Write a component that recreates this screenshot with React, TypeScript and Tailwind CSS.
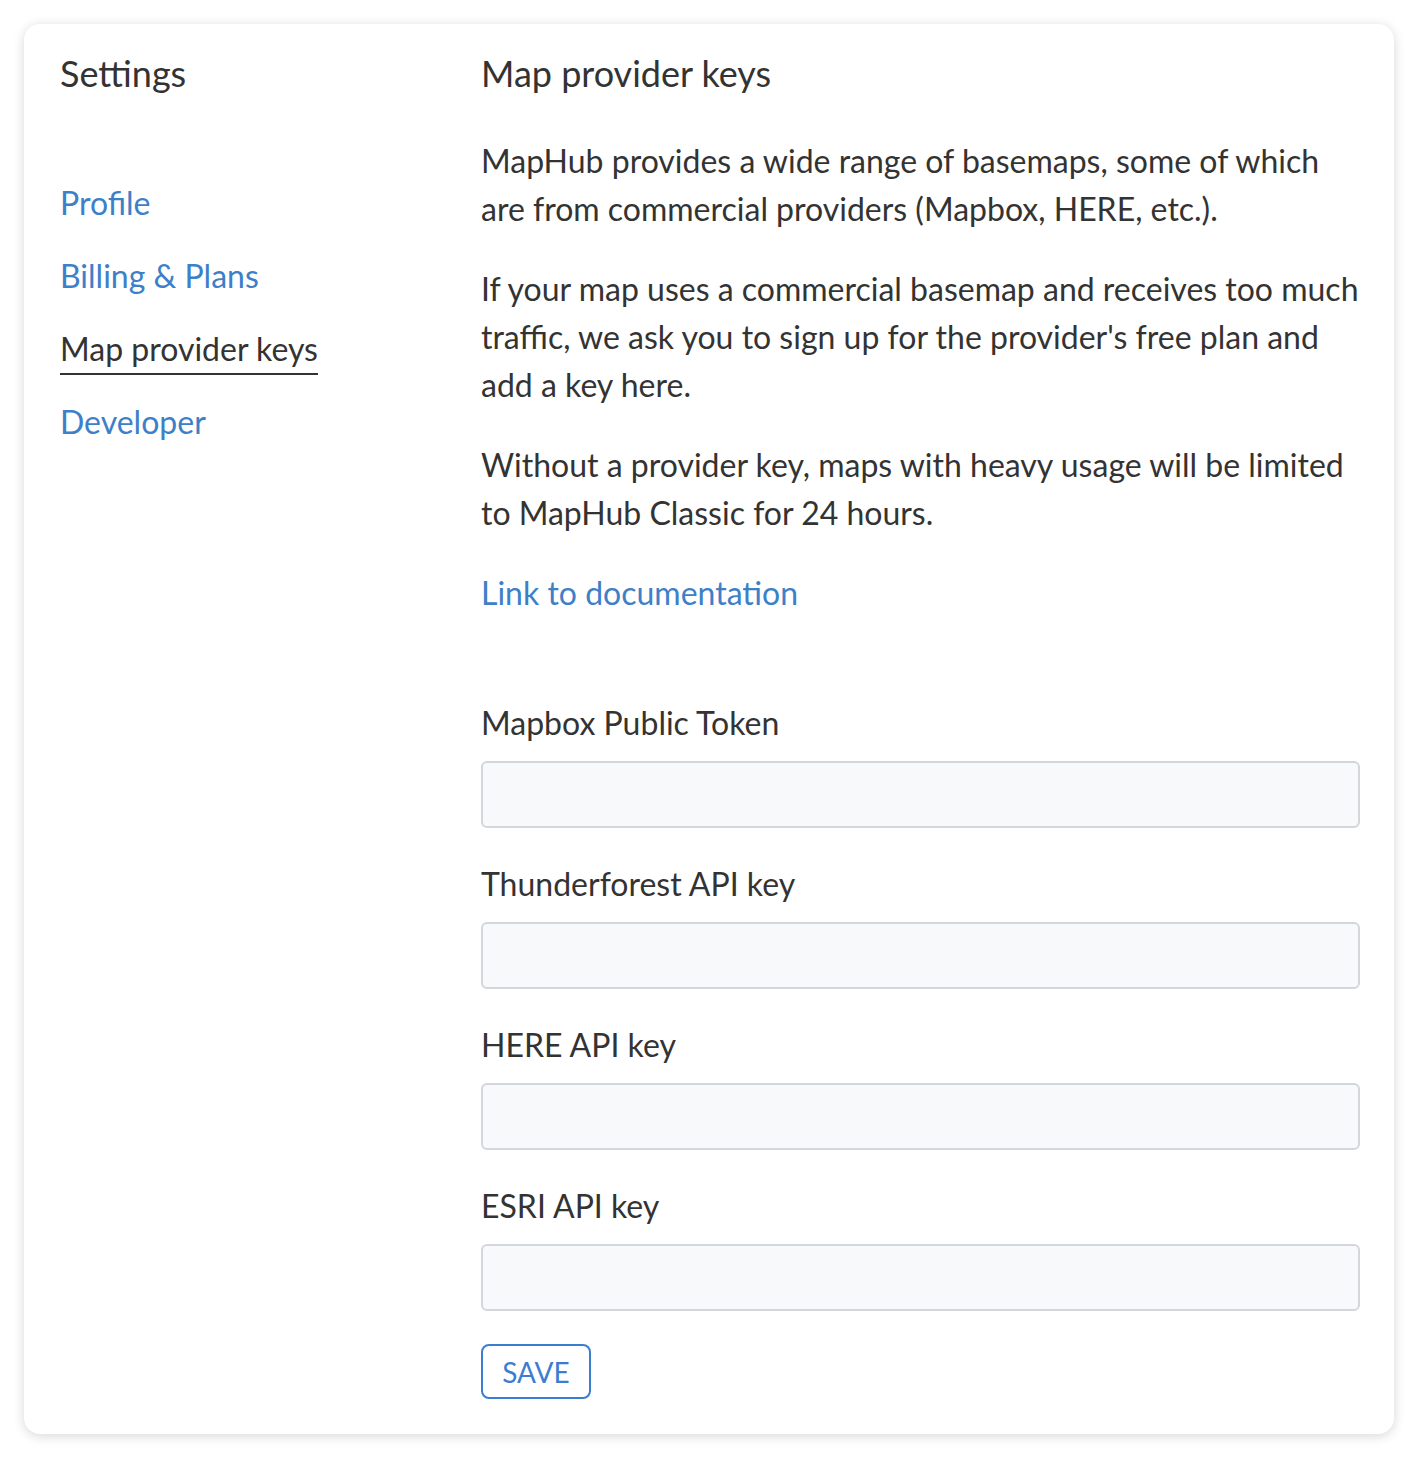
import { useState } from "react";

const fields = [
  "Mapbox Public Token",
  "Thunderforest API key",
  "HERE API key",
  "ESRI API key",
];

const navItems = [
  { label: "Profile", active: false },
  { label: "Billing & Plans", active: false },
  { label: "Map provider keys", active: true },
  { label: "Developer", active: false },
];

export default function App() {
  const [values, setValues] = useState<string[]>(fields.map(() => ""));

  return (
    <div className="min-h-screen bg-white p-[24px] pb-[25px] font-['Lato','Liberation_Sans',sans-serif] text-[#333]">
      <div className="flex rounded-[16px] bg-white pl-[36px] pr-[34px] pt-[25px] pb-[35px] shadow-[0_2px_12px_rgba(0,0,0,0.16)]">
        {/* Sidebar */}
        <aside className="w-[421px] shrink-0">
          <h2 className="text-[36px] leading-[48px]">Settings</h2>
          <nav className="mt-[82px] flex flex-col gap-[25px]">
            {navItems.map((item) => (
              <a
                key={item.label}
                href="#"
                className={
                  item.active
                    ? "-mb-[2px] w-fit border-b-2 border-[#333] text-[32px] leading-[48px] text-[#333]"
                    : "w-fit text-[32px] leading-[48px] text-[#3d80c8]"
                }
              >
                {item.label}
              </a>
            ))}
          </nav>
        </aside>

        {/* Content */}
        <main className="flex-1">
          <h2 className="text-[36px] leading-[48px]">Map provider keys</h2>
          <div className="mt-[40px] flex flex-col gap-[32px] text-[32px] leading-[48px]">
            <p>
              MapHub provides a wide range of basemaps, some of which are from
              commercial providers (Mapbox, HERE, etc.).
            </p>
            <p>
              If your map uses a commercial basemap and receives too much
              traffic, we ask you to sign up for the provider's free plan and
              add a key here.
            </p>
            <p>
              Without a provider key, maps with heavy usage will be limited to
              MapHub Classic for 24 hours.
            </p>
            <a href="#" className="w-fit text-[#3d80c8]">
              Link to documentation
            </a>
          </div>

          <form className="mt-[82px] flex flex-col gap-[32px]">
            {fields.map((f, i) => (
              <label key={f} className="flex flex-col">
                <span className="text-[32px] leading-[48px]">{f}</span>
                <input
                  value={values[i]}
                  onChange={(e) => {
                    const next = [...values];
                    next[i] = e.target.value;
                    setValues(next);
                  }}
                  className="mt-[14px] h-[67px] w-full rounded-[6px] border-2 border-[#d3d6da] bg-[#f8f9fa] px-4 text-[28px] outline-none"
                />
              </label>
            ))}
          </form>

          <button
            type="button"
            className="mt-[33px] h-[55px] w-[110px] rounded-[8px] border-2 border-[#3d7dd0] text-[28px] text-[#3d7dd0]"
          >
            SAVE
          </button>
        </main>
      </div>
    </div>
  );
}
